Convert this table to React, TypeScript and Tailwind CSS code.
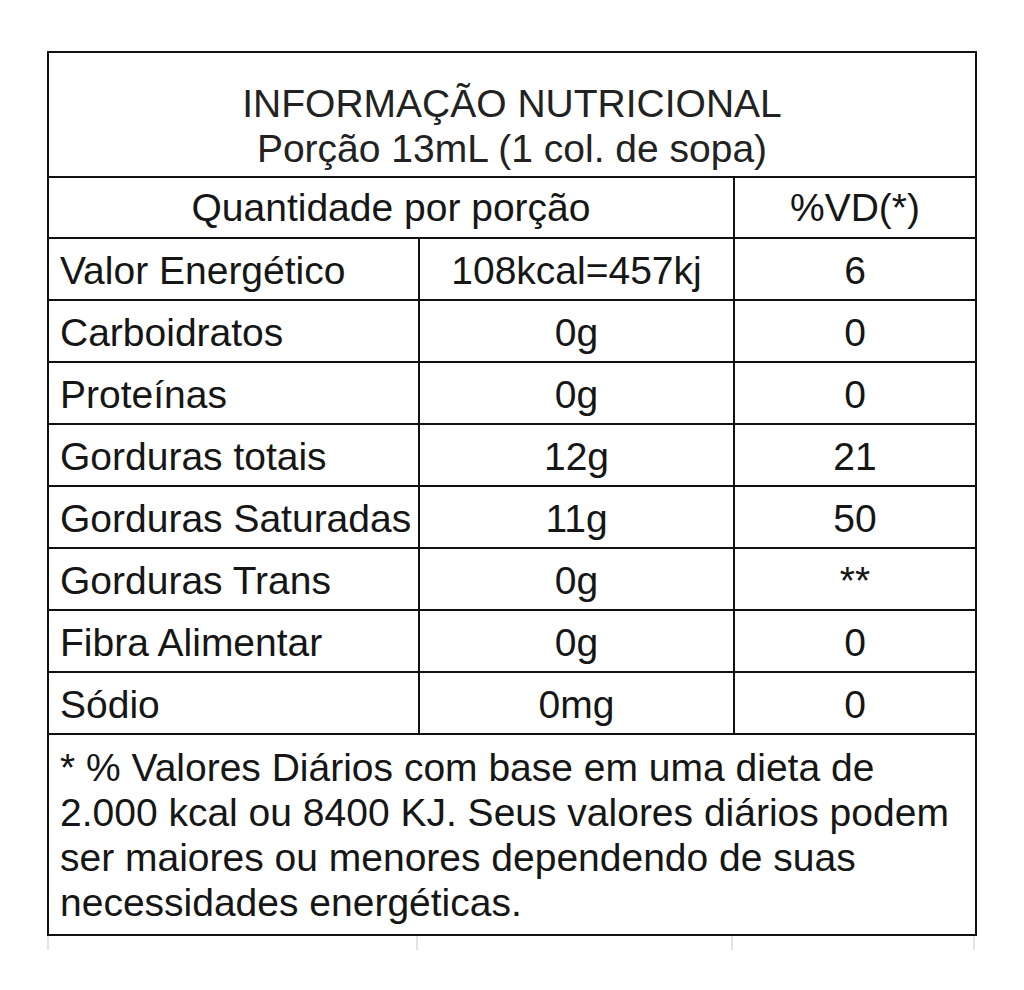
import React from "react"

const rows: [string, string, string][] = [
  ["Valor Energético", "108kcal=457kj", "6"],
  ["Carboidratos", "0g", "0"],
  ["Proteínas", "0g", "0"],
  ["Gorduras totais", "12g", "21"],
  ["Gorduras Saturadas", "11g", "50"],
  ["Gorduras Trans", "0g", "**"],
  ["Fibra Alimentar", "0g", "0"],
  ["Sódio", "0mg", "0"],
]

export default function App() {
  return (
    <div className="w-[1024px] h-[990px] bg-white pt-[51px] pl-[47px] text-[#161616] text-[39px] leading-[45px] font-['Liberation_Sans',Arial,sans-serif]">
      <table className="border-collapse table-fixed w-[928px]">
        <colgroup>
          <col className="w-[371px]" />
          <col className="w-[315px]" />
          <col className="w-[242px]" />
        </colgroup>
        <tbody>
          {/* Title */}
          <tr>
            <td colSpan={3} className="border-2 border-[#111] h-[125px] text-center align-middle text-[#222] pt-[22px]">
              INFORMAÇÃO NUTRICIONAL
              <br />
              Porção 13mL (1 col. de sopa)
            </td>
          </tr>
          <tr>
            <td colSpan={2} className="border-2 border-[#111] h-[61px] text-center align-middle">
              Quantidade por porção
            </td>
            <td className="border-2 border-[#111] text-center align-middle">%VD(*)</td>
          </tr>
          {rows.map(([name, qty, vd]) => (
            <tr key={name}>
              <td className="border-2 border-[#111] h-[62px] pl-[11px] pt-[3px] align-middle whitespace-nowrap">{name}</td>
              <td className="border-2 border-[#111] pt-[3px] text-center align-middle">{qty}</td>
              <td className="border-2 border-[#111] pt-[3px] text-center align-middle">{vd}</td>
            </tr>
          ))}
          {/* Footnote */}
          <tr>
            <td colSpan={3} className="border-2 border-[#111] h-[201px] pl-[11px] pr-2 align-middle">
              * % Valores Diários com base em uma dieta de
              <br />
              2.000 kcal ou 8400 KJ. Seus valores diários podem
              <br />
              ser maiores ou menores dependendo de suas
              <br />
              necessidades energéticas.
            </td>
          </tr>
        </tbody>
      </table>
      {/* faint spreadsheet gridlines below the table */}
      <div className="flex w-[928px] h-[14px]">
        <div className="w-[371px] border-l-2 border-r-2 border-[#e4e4e4]" />
        <div className="w-[315px] border-r-2 border-[#e4e4e4]" />
        <div className="w-[242px] border-r-2 border-[#e4e4e4]" />
      </div>
    </div>
  )
}
